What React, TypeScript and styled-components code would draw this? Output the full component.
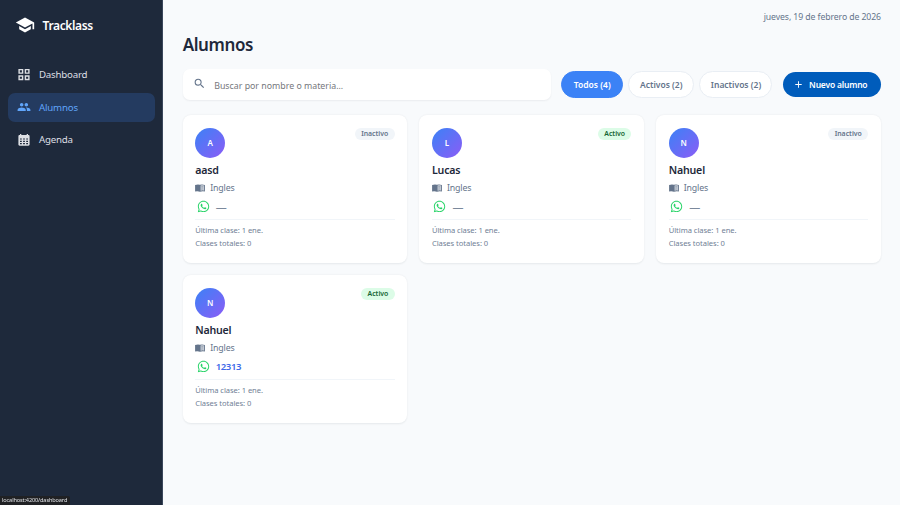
import React from "react";
import styled, { createGlobalStyle, css } from "styled-components";
import { MdSchool, MdPeople, MdSearch, MdAdd } from "react-icons/md";
import { FaWhatsapp } from "react-icons/fa";

const GlobalStyle = createGlobalStyle`
  *, *::before, *::after { box-sizing: border-box; }
  body {
    margin: 0;
    background: #f8fafc;
    font-family: "Segoe UI", "Noto Sans", "Open Sans", sans-serif;
    color: #1e293b;
  }
  button, input { font-family: inherit; }
`;

const Shell = styled.div`
  display: flex;
  width: 100%;
  height: 100vh;
  overflow: hidden;
`;

const Sidebar = styled.aside`
  flex: none;
  width: 163px;
  background: #1e293b;
  border-right: 1px solid #3a475b;
  color: #e2e2e6;
`;

const Brand = styled.div`
  display: flex;
  align-items: center;
  gap: 7.5px;
  height: 50px;
  padding-left: 15px;
  color: #fff;
  font-size: 12px;
  font-weight: 600;
  letter-spacing: -0.35px;
  svg { width: 20px; height: 20px; }
`;

const Nav = styled.nav`
  display: flex;
  flex-direction: column;
  gap: 3px;
  padding: 10px 7.5px 0;
`;

const NavItem = styled.a<{ $active?: boolean }>`
  display: flex;
  align-items: center;
  gap: 8px;
  height: 29.6px;
  padding-left: 9.5px;
  border-radius: 7px;
  font-size: 9.7px;
  letter-spacing: -0.2px;
  color: ${(p) => (p.$active ? "#60a5fa" : "#dddfe4")};
  background: ${(p) => (p.$active ? "#243b60" : "transparent")};
  svg { width: 14px; height: 14px; }
`;

const Main = styled.main`
  flex: 1;
  min-width: 0;
  padding: 0 19px 0 19.7px;
`;

const DateBar = styled.div`
  height: 34px;
  line-height: 34px;
  text-align: right;
  font-size: 8.7px;
  letter-spacing: -0.09px;
  color: #64748b;
`;

const Title = styled.h1`
  margin: 0;
  height: 35px;
  line-height: 22px;
  font-size: 17px;
  font-weight: 600;
  letter-spacing: -0.4px;
`;

const Toolbar = styled.div`
  display: flex;
  align-items: center;
  height: 31px;
`;

const Search = styled.label`
  display: flex;
  align-items: center;
  gap: 8.5px;
  width: 368.8px;
  height: 31px;
  padding-left: 10px;
  border-radius: 7px;
  background: #fff;
  box-shadow: 0 1px 2px rgba(15, 23, 42, 0.06);
  svg { width: 13px; height: 13px; margin-bottom: 2px; color: #64748b; }
`;

const SearchInput = styled.input`
  flex: 1;
  border: 0;
  outline: 0;
  padding: 2px 0 0;
  background: none;
  font-size: 8.8px;
  &::placeholder { color: #75777c; opacity: 1; }
`;

const Filters = styled.div`
  display: flex;
  gap: 5px;
  margin-left: 10px;
`;

const Chip = styled.button<{ $width: number; $active?: boolean }>`
  width: ${(p) => p.$width}px;
  height: 27px;
  padding: 0;
  border: 1px solid ${(p) => (p.$active ? "#3b82f6" : "#e9eef4")};
  border-radius: 14px;
  background: ${(p) => (p.$active ? "#3b82f6" : "#fff")};
  color: ${(p) => (p.$active ? "#fff" : "#64748b")};
  font-size: 8.5px;
  font-weight: 600;
`;

const NewButton = styled.button`
  display: flex;
  align-items: center;
  justify-content: center;
  gap: 5px;
  width: 98.5px;
  height: 25px;
  margin-left: auto;
  padding: 0 3px 0 0;
  border: 0;
  border-radius: 13px;
  background: #005cbb;
  color: #fff;
  font-size: 8.5px;
  font-weight: 600;
  letter-spacing: -0.2px;
  svg { width: 11px; height: 11px; }
`;

const Grid = styled.section`
  display: grid;
  grid-template-columns: repeat(3, 1fr);
  gap: 12px;
  padding-top: 14.5px;
`;

const Card = styled.article`
  height: 148px;
  padding: 13px 12.8px 0 12.5px;
  border-radius: 8px;
  background: #fff;
  box-shadow: 0 0.5px 2px rgba(15, 23, 42, 0.08);
`;

const CardTop = styled.div`
  display: flex;
  justify-content: space-between;
  align-items: flex-start;
  height: 33.5px;
`;

const Avatar = styled.div`
  display: grid;
  place-items: center;
  width: 30px;
  height: 30px;
  border-radius: 50%;
  background: linear-gradient(135deg, #3b82f6, #8b5cf6);
  color: #fff;
  font-size: 8px;
  font-weight: 600;
`;

const Badge = styled.span<{ $active: boolean }>`
  height: 12.5px;
  line-height: 12.5px;
  padding: 0 6.3px;
  border-radius: 7px;
  font-size: 6.9px;
  font-weight: 600;
  ${(p) =>
    p.$active
      ? css`background: #dcfce7; color: #166534;`
      : css`background: #f1f5f9; color: #64748b;`}
`;

const Name = styled.h2`
  margin: 0;
  height: 18px;
  line-height: 18px;
  font-size: 10.6px;
  font-weight: 600;
  letter-spacing: -0.18px;
`;

const Subject = styled.div`
  display: flex;
  align-items: center;
  gap: 5px;
  height: 18px;
  font-size: 8.8px;
  letter-spacing: -0.15px;
  color: #64748b;
  svg { width: 10px; height: 10px; }
`;

const Phone = styled.div<{ $linked: boolean }>`
  display: flex;
  align-items: center;
  gap: 6px;
  height: 19px;
  padding-left: 1.5px;
  font-size: 9.6px;
  letter-spacing: -0.4px;
  font-weight: ${(p) => (p.$linked ? 600 : 400)};
  color: ${(p) => (p.$linked ? "#3f6ae8" : "#7b899c")};
  svg { width: 13px; height: 13px; color: #25d366; }
`;

const Dash = styled.span`
  width: 10px;
  font-size: 11px;
  line-height: 15px;
`;

const Stats = styled.div`
  margin-top: 3px;
  padding-top: 4px;
  border-top: 1px solid #f1f5f9;
  font-size: 7.6px;
  letter-spacing: -0.06px;
  line-height: 13.2px;
  color: #708096;
`;

const StatusLink = styled.div`
  position: fixed;
  left: 0;
  bottom: 0;
  width: 70px;
  height: 9px;
  padding-left: 2px;
  border-top-right-radius: 2px;
  background: #202124;
  color: #dfe1e5;
  font-size: 5.6px;
  letter-spacing: -0.13px;
  line-height: 9px;
`;

function GridIcon() {
  return (
    <svg viewBox="0 0 14 14" fill="none" stroke="currentColor" strokeWidth="1.4">
      <path d="M2.1 1.6h3.5v3.5H2.1zM8.4 1.6h3.5v3.5H8.4zM2.1 8h3.5v3.5H2.1zM8.4 8h3.5v3.5H8.4z" />
    </svg>
  );
}

function CalendarIcon() {
  return (
    <svg viewBox="0 0 14 14" fill="currentColor" fillRule="evenodd">
      <path d="M3 1h1.3v1.1h5.4V1H11v1.1h.4c.7 0 1.2.5 1.2 1.2v8.2c0 .7-.5 1.2-1.2 1.2H2.6c-.7 0-1.2-.5-1.2-1.2V3.3c0-.7.5-1.2 1.2-1.2H3zM3 5.4v1.2h1.8V5.4zM6.1 5.4v1.2h1.8V5.4zM9.2 5.4v1.2H11V5.4zM3 7.7v1.2h1.8V7.7zM6.1 7.7v1.2h1.8V7.7zM9.2 7.7v1.2H11V7.7zM3 10v1.2h1.8V10zM6.1 10v1.2h1.8V10zM9.2 10v1.2H11V10z" />
    </svg>
  );
}

function BookIcon() {
  return (
    <svg viewBox="0 0 10 10" fill="none">
      <path d="M.1 2Q2.8 1 5 1.8Q7.2 1 9.9 2v6.4Q7.2 7.8 5 8.7Q2.8 7.8.1 8.4z" fill="#64748b" />
      <path d="M5.6 2.4Q7.2 1.9 9 2.5v5.1Q7.2 7.1 5.6 7.7z" fill="#d5dae1" />
      <path d="M6.2 3.7q1.1-.4 2.3-.1M6.2 5q1.1-.4 2.3-.1M6.2 6.3q1.1-.4 2.3-.1" stroke="#64748b" strokeWidth=".5" />
    </svg>
  );
}

interface Student {
  name: string;
  active: boolean;
  phone?: string;
}

const students: Student[] = [
  { name: "aasd", active: false },
  { name: "Lucas", active: true },
  { name: "Nahuel", active: false },
  { name: "Nahuel", active: true, phone: "12313" },
];

function StudentCard({ student }: { student: Student }) {
  return (
    <Card>
      <CardTop>
        <Avatar>{student.name[0].toUpperCase()}</Avatar>
        <Badge $active={student.active}>{student.active ? "Activo" : "Inactivo"}</Badge>
      </CardTop>
      <Name>{student.name}</Name>
      <Subject>
        <BookIcon />
        <span>Ingles</span>
      </Subject>
      <Phone $linked={Boolean(student.phone)}>
        <FaWhatsapp />
        {student.phone ? <span>{student.phone}</span> : <Dash>—</Dash>}
      </Phone>
      <Stats>
        <div>Última clase: 1 ene.</div>
        <div>Clases totales: 0</div>
      </Stats>
    </Card>
  );
}

export default function App() {
  return (
    <>
      <GlobalStyle />
      <Shell>
        <Sidebar>
          <Brand>
            <MdSchool />
            <span>Tracklass</span>
          </Brand>
          <Nav>
            <NavItem><GridIcon /><span>Dashboard</span></NavItem>
            <NavItem $active><MdPeople /><span>Alumnos</span></NavItem>
            <NavItem><CalendarIcon /><span>Agenda</span></NavItem>
          </Nav>
        </Sidebar>
        <Main>
          <DateBar>jueves, 19 de febrero de 2026</DateBar>
          <Title>Alumnos</Title>
          <Toolbar>
            <Search>
              <MdSearch />
              <SearchInput placeholder="Buscar por nombre o materia..." />
            </Search>
            <Filters>
              <Chip $width={61.5} $active>Todos (4)</Chip>
              <Chip $width={66.5}>Activos (2)</Chip>
              <Chip $width={73}>Inactivos (2)</Chip>
            </Filters>
            <NewButton><MdAdd /><span>Nuevo alumno</span></NewButton>
          </Toolbar>
          <Grid>
            {students.map((student, i) => (
              <StudentCard key={i} student={student} />
            ))}
          </Grid>
        </Main>
      </Shell>
      <StatusLink>localhost:4200/dashboard</StatusLink>
    </>
  );
}
